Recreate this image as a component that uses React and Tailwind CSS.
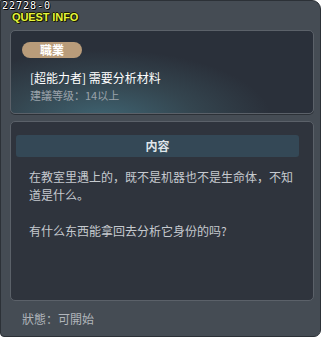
import React from "react";

const cjk = "font-['Noto_Sans_CJK_SC','Noto_Sans',sans-serif]";

const QuestInfo = () => {
  return (
    <div className="w-[322px] h-[338px] bg-white">
      <div className="relative w-[321px] h-[337px] bg-[#454c54] border border-[#2c3137] rounded-tr-[9px] rounded-br-[7px] rounded-bl-[4px] flex flex-col pl-[9px] pr-[6px]">
        {/* Title */}
        <div className="absolute left-[1px] top-0 text-[10px] leading-[10px] tracking-[1px] text-white font-['DejaVu_Sans_Mono',monospace] [text-shadow:1px_1px_0_#000,-1px_0_0_#000,0_-1px_0_#000]">
          22728-0
        </div>
        <div className="absolute left-[11px] top-[11px] text-[11px] leading-[11px] font-bold tracking-[-0.1px] text-[#e4f53c] font-['Liberation_Sans',sans-serif] [text-shadow:1px_1px_0_#1a1a00,-1px_0_0_#1a1a00,0_-1px_0_#1a1a00,1px_0_0_#1a1a00]">
          QUEST INFO
        </div>

        {/* Job panel */}
        <div className="mt-[29px] h-[84px] w-[304px] rounded-[5px] border border-[#5b6169] shadow-[0_1px_0_#2c3137] bg-[radial-gradient(ellipse_170px_70px_at_30%_108%,#3f6472_0%,#34454f_55%,#2a303a_100%)] px-[11px] pt-[11px]">
          <div className={`w-[60px] h-[16px] rounded-full bg-[#b99c7a] flex items-center justify-center text-[12px] font-bold text-white ${cjk}`}>
            職業
          </div>
          <div className={`mt-[11px] ml-[8px] text-[12px] leading-[18px] text-white ${cjk}`}>
            [超能力者] 需要分析材料
          </div>
          <div className={`ml-[8px] text-[11px] leading-[16px] text-[#9ba3ab] ${cjk}`}>
            建議等级：14以上
          </div>
        </div>

        {/* Content panel */}
        <div className="mt-[7px] h-[180px] w-[304px] rounded-[5px] border border-[#5b6169] bg-[#2f343d] px-[5px] pt-[13px]">
          <div className={`h-[22px] w-[283px] rounded-[3px] bg-[#344856] flex items-center justify-center text-[12px] font-bold text-[#dfe6ea] ${cjk}`}>
            内容
          </div>
          <div className={`mt-[11px] ml-[13px] w-[275px] text-[12px] leading-[18px] text-[#c6cacf] ${cjk}`}>
            <p className="whitespace-nowrap">在教室里遇上的，既不是机器也不是生命体，不知</p>
            <p className="whitespace-nowrap">道是什么。</p>
            <p className="mt-[18px] whitespace-nowrap">有什么东西能拿回去分析它身份的吗?</p>
          </div>
        </div>

        {/* Status */}
        <div className={`mt-[10px] ml-[12px] text-[12px] leading-[16px] text-[#b1b6bb] ${cjk}`}>
          狀態：可開始
        </div>
      </div>
    </div>
  );
};

export default function App() {
  return <QuestInfo />;
}
